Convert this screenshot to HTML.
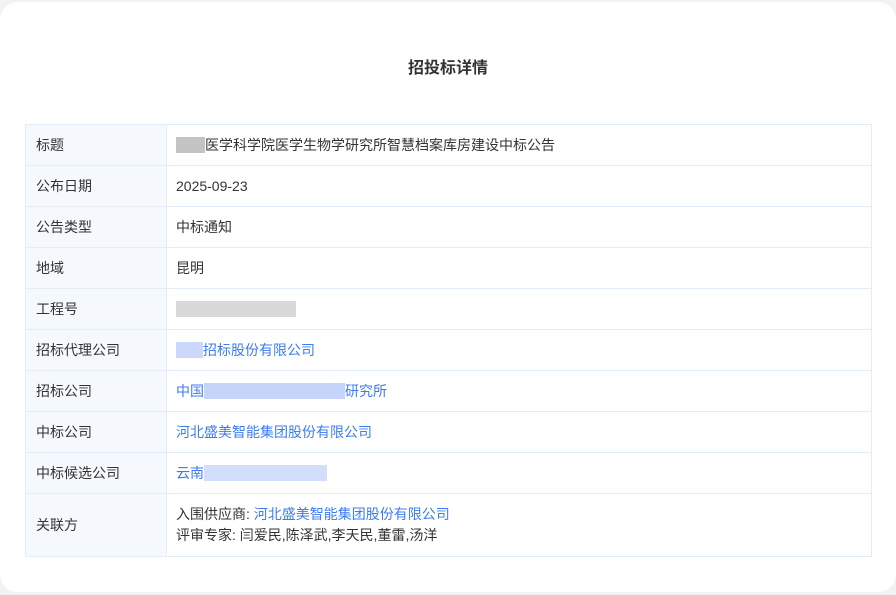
<!DOCTYPE html>
<html><head><meta charset="utf-8"><style>
html,body{margin:0;padding:0;}
body{width:896px;height:595px;background:#f2f2f2;overflow:hidden;font-family:"Liberation Sans","Noto Sans CJK SC",sans-serif;}
.card{position:absolute;left:0;top:2px;width:896px;height:590px;background:#fff;border-radius:18px;}
h1{position:absolute;left:0;width:896px;top:57px;margin:0;text-align:center;font-size:16px;font-weight:bold;color:#333;line-height:20px;}
table{position:absolute;left:25px;top:122px;width:847px;border-collapse:collapse;font-size:14px;color:#333;}
td{border:1px solid #e3ecf7;height:40px;padding:0 0 0 10px;line-height:21px;}
td.l{width:130px;background:#f5f8fd;}
td.v{padding-left:9px;}
a{color:#3b7cf4;text-decoration:none;}
.b{display:inline-block;height:16px;vertical-align:-3px;}
</style></head><body>
<div class="card">
<h1>招投标详情</h1>
<table>
<tr><td class="l">标题</td><td class="v"><span class="b" style="width:29px;background:#c4c4c4"></span>医学科学院医学生物学研究所智慧档案库房建设中标公告</td></tr>
<tr><td class="l">公布日期</td><td class="v">2025-09-23</td></tr>
<tr><td class="l">公告类型</td><td class="v">中标通知</td></tr>
<tr><td class="l">地域</td><td class="v">昆明</td></tr>
<tr><td class="l">工程号</td><td class="v"><span class="b" style="width:120px;background:#d8d8d8"></span></td></tr>
<tr><td class="l">招标代理公司</td><td class="v"><span class="b" style="width:27px;background:#c9d8fb"></span><a>招标股份有限公司</a></td></tr>
<tr><td class="l">招标公司</td><td class="v"><a>中国</a><span class="b" style="width:141px;background:#c5d5fa"></span><a>研究所</a></td></tr>
<tr><td class="l">中标公司</td><td class="v"><a>河北盛美智能集团股份有限公司</a></td></tr>
<tr><td class="l">中标候选公司</td><td class="v"><a>云南</a><span class="b" style="width:123px;background:#d3defb"></span></td></tr>
<tr><td class="l" style="height:62px">关联方</td><td class="v">入围供应商: <a>河北盛美智能集团股份有限公司</a><br>评审专家: 闫爱民,陈泽武,李天民,董雷,汤洋</td></tr>
</table>
</div>
</body></html>
